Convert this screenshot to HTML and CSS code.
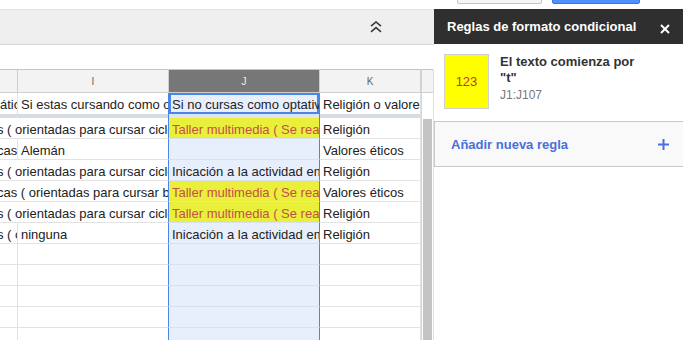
FILE: index.html
```html
<!DOCTYPE html>
<html lang="es">
<head>
  <meta charset="UTF-8" />
  <title>Reglas de formato condicional</title>
  <link rel="stylesheet" href="styles.css">
</head>
<body>
  <!-- botones de arriba (cortados) -->
  <div class="topbar">
    <div class="btn btn-cancel"></div>
    <div class="btn btn-save"></div>
  </div>

  <div class="workspace">
    <div class="sheet">
      <div class="toolbar">
        <svg class="collapse" width="12" height="12" viewBox="0 0 12 12">
          <polyline points="1,5.2 6,1 11,5.2" />
          <polyline points="1,10.8 6,6.6 11,10.8" />
        </svg>
      </div>
      <div class="formula"></div>

      <div class="gridwrap">
        <div class="grid">
          <div class="row head">
            <div class="cell"></div>
            <div class="cell">I</div>
            <div class="cell sel">J</div>
            <div class="cell">K</div>
          </div>

          <div class="row first">
            <div class="cell c-h">áticas</div>
            <div class="cell c-i">Si estas cursando como optativa de 3º</div>
            <div class="cell c-j active">Si no cursas como optativa ninguna de las anteriores</div>
            <div class="cell c-k">Religión o valores éticos</div>
          </div>

          <div class="row band">
            <div class="cell"></div>
            <div class="cell c-i"></div>
            <div class="cell c-j"></div>
            <div class="cell"></div>
          </div>

          <div class="row">
            <div class="cell c-h cut spill">s ( orientadas para cursar ciclos formativos )</div>
            <div class="cell c-i"></div>
            <div class="cell c-j yellow">Taller multimedia ( Se realiza en horario de tarde )</div>
            <div class="cell c-k">Religión</div>
          </div>
          <div class="row">
            <div class="cell c-h cut">cas</div>
            <div class="cell c-i">Alemán</div>
            <div class="cell c-j"></div>
            <div class="cell c-k">Valores éticos</div>
          </div>
          <div class="row">
            <div class="cell c-h cut spill">s ( orientadas para cursar ciclos formativos )</div>
            <div class="cell c-i"></div>
            <div class="cell c-j">Inicación a la actividad emprendedora</div>
            <div class="cell c-k">Religión</div>
          </div>
          <div class="row">
            <div class="cell c-h cut spill">cas ( orientadas para cursar bachillerato )</div>
            <div class="cell c-i"></div>
            <div class="cell c-j yellow">Taller multimedia ( Se realiza en horario de tarde )</div>
            <div class="cell c-k">Valores éticos</div>
          </div>
          <div class="row">
            <div class="cell c-h cut spill">s ( orientadas para cursar ciclos formativos )</div>
            <div class="cell c-i"></div>
            <div class="cell c-j yellow">Taller multimedia ( Se realiza en horario de tarde )</div>
            <div class="cell c-k">Religión</div>
          </div>
          <div class="row">
            <div class="cell c-h cut">s ( o</div>
            <div class="cell c-i">ninguna</div>
            <div class="cell c-j">Inicación a la actividad emprendedora</div>
            <div class="cell c-k">Religión</div>
          </div>

          <div class="row"><div class="cell c-h"></div><div class="cell c-i"></div><div class="cell c-j"></div><div class="cell c-k"></div></div>
          <div class="row"><div class="cell c-h"></div><div class="cell c-i"></div><div class="cell c-j"></div><div class="cell c-k"></div></div>
          <div class="row"><div class="cell c-h"></div><div class="cell c-i"></div><div class="cell c-j"></div><div class="cell c-k"></div></div>
          <div class="row"><div class="cell c-h"></div><div class="cell c-i"></div><div class="cell c-j"></div><div class="cell c-k"></div></div>
          <div class="row"><div class="cell c-h"></div><div class="cell c-i"></div><div class="cell c-j"></div><div class="cell c-k"></div></div>
        </div>

        <div class="vscroll">
          <div class="vs-head"></div>
          <div class="vs-gap"></div>
          <div class="vs-thumb"></div>
        </div>
      </div>
    </div>

    <aside class="sidebar">
      <div class="sb-head">
        <span>Reglas de formato condicional</span>
        <svg class="close" width="10" height="10" viewBox="0 0 10 10">
          <line x1="1" y1="1" x2="9" y2="9" />
          <line x1="9" y1="1" x2="1" y2="9" />
        </svg>
      </div>

      <div class="rule">
        <div class="swatch">123</div>
        <div class="rule-text">
          <div class="rule-title">El texto comienza por<br>"t"</div>
          <div class="rule-range">J1:J107</div>
        </div>
      </div>

      <div class="add-rule">
        <span>Añadir nueva regla</span>
        <svg class="plus" width="11" height="11" viewBox="0 0 11 11">
          <line x1="5.5" y1="0" x2="5.5" y2="11" />
          <line x1="0" y1="5.5" x2="11" y2="5.5" />
        </svg>
      </div>
    </aside>
  </div>
</body>
</html>
```

FILE: styles.css
```css
* { box-sizing: border-box; }

body {
  margin: 0;
  width: 683px;
  height: 340px;
  overflow: hidden;
  font-family: 'Liberation Sans', Arial, sans-serif;
  font-size: 13px;
  color: #222;
  background: #fff;
}

/* barra superior */
.topbar {
  height: 9px;
  overflow: hidden;
  display: flex;
  gap: 10px;
  padding-left: 457px;
}

.btn {
  height: 30px;
  margin-top: -26px;
  border-radius: 2px;
}

.btn-cancel {
  width: 85px;
  background: #f5f5f5;
  border: 1px solid #c6c6c6;
}

.btn-save {
  width: 88px;
  background: #4d90fe;
  border: 1px solid #3079ed;
}

.workspace {
  display: flex;
  height: 331px;
}

/* hoja */
.sheet {
  width: 434px;
  display: flex;
  flex-direction: column;
}

.toolbar {
  height: 36px;
  background: #efefef;
  border-top: 1px solid #e0e0e0;
  border-bottom: 1px solid #d6d6d6;
  display: flex;
  align-items: center;
  justify-content: flex-end;
  padding-right: 52px;
}

.collapse polyline {
  fill: none;
  stroke: #3a3a3a;
  stroke-width: 1.6;
}

.formula {
  height: 24px;
}

.gridwrap {
  flex: 1;
  display: flex;
  overflow: hidden;
}

.grid {
  width: 421px;
  overflow: hidden;
}

.row {
  display: grid;
  grid-template-columns: 18px 151px 151px 101px;
}

.cell {
  height: 21px;
  padding: 3px 3px 0;
  line-height: 17px;
  white-space: nowrap;
  overflow: hidden;
  border-right: 1px solid #e2e2e2;
  border-bottom: 1px solid #e2e2e2;
}

.row.head {
  border-top: 1px solid #c4c4c4;
}

.row.head .cell {
  height: 23px;
  padding: 0;
  background: #f3f3f3;
  border-color: #cfcfcf;
  text-align: center;
  font-size: 10px;
  line-height: 23px;
  color: #666;
}

.row.head .cell.sel {
  background: #777;
  color: #eee;
}

.row.first .cell {
  border-bottom: none;
}

.row.band .cell {
  height: 4px;
  padding: 0;
  border-bottom: none;
  background: #d7dbe3;
}

.row.band .c-j {
  background: #dfe5f0;
}

.c-h {
  padding-left: 0;
  padding-right: 0;
}

.c-h.cut {
  text-indent: -3px;
}

.c-h.spill {
  overflow: visible;
  border-right-color: transparent;
}

.c-i,
.c-j {
  border-right-color: #4a86e8 !important;
}

.c-j {
  background: #e8effc;
  border-bottom-color: #d9e0ec;
}

.c-j.active {
  box-shadow: inset 0 0 0 2px #4a86e8;
}

.c-j.yellow {
  background: #e9ef3b;
  color: #c4504a;
}

/* scroll vertical */
.vscroll {
  width: 13px;
  display: flex;
  flex-direction: column;
  border-left: 1px solid #d4d4d4;
  border-right: 1px solid #dedede;
}

.vs-head {
  height: 24px;
  background: #f3f3f3;
  border-top: 1px solid #c4c4c4;
  border-bottom: 1px solid #cfcfcf;
}

.vs-gap {
  height: 25px;
}

.vs-thumb {
  flex: 1;
  margin: 1px 1px 0;
  background: #c3c3c3;
}

/* panel lateral */
.sidebar {
  width: 249px;
  display: flex;
  flex-direction: column;
}

.sb-head {
  height: 35px;
  background: #2f2f2f;
  color: #fff;
  font-weight: bold;
  display: flex;
  align-items: center;
  justify-content: space-between;
  padding: 0 13px;
}

.close {
  margin-top: 4px;
}

.close line {
  stroke: #fff;
  stroke-width: 2;
}

.rule {
  display: flex;
  padding: 10px 0 0 10px;
}

.swatch {
  width: 45px;
  height: 55px;
  background: #ff0;
  border: 1px solid #cfcfcf;
  display: flex;
  align-items: center;
  justify-content: center;
  color: #c0392b;
}

.rule-text {
  margin-left: 11px;
}

.rule-title {
  font-weight: bold;
  line-height: 16px;
  color: #333;
}

.rule-range {
  margin-top: 1px;
  font-size: 12px;
  line-height: 16px;
  color: #777;
}

.add-rule {
  margin-top: 12px;
  height: 46px;
  background: #f9f9f9;
  border: 1px solid #c8c8c8;
  border-right: none;
  display: flex;
  align-items: center;
  justify-content: space-between;
  padding: 0 14px 0 16px;
  font-weight: bold;
  color: #4a6fdc;
}

.plus line {
  stroke: #4a6fdc;
  stroke-width: 2;
}
```
